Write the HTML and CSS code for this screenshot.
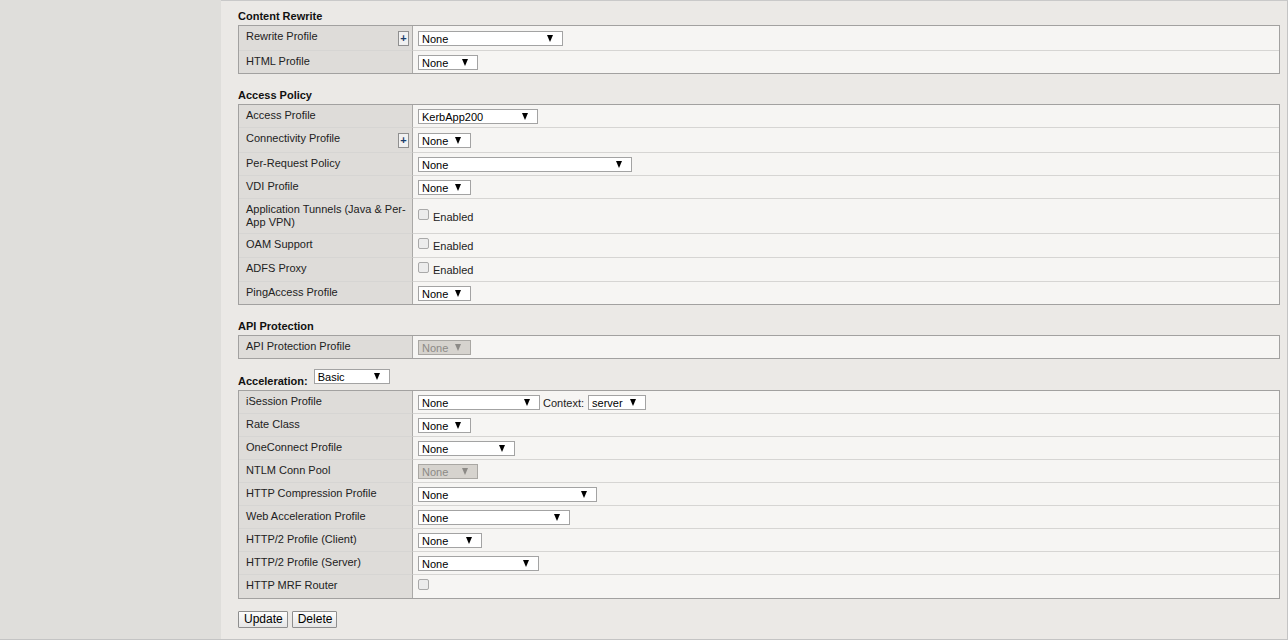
FILE: index.html
```html
<!DOCTYPE html>
<html lang="en">

<head>
    <meta charset="UTF-8">
    <meta name="viewport" content="width=device-width, initial-scale=1.0">
    <title>Virtual Server Properties</title>
    <link rel="stylesheet" href="styles.css">
</head>

<body>
    <div class="sidebar"></div>

    <div class="main">
        <h2 class="section-title">Content Rewrite</h2>
        <table class="props">
            <tr>
                <td class="label">Rewrite Profile <span class="plus">+</span></td>
                <td class="value"><span class="select w145">None<i class="arrow"></i></span></td>
            </tr>
            <tr>
                <td class="label">HTML Profile</td>
                <td class="value"><span class="select w60">None<i class="arrow"></i></span></td>
            </tr>
        </table>

        <h2 class="section-title">Access Policy</h2>
        <table class="props">
            <tr>
                <td class="label">Access Profile</td>
                <td class="value"><span class="select w120">KerbApp200<i class="arrow"></i></span></td>
            </tr>
            <tr>
                <td class="label">Connectivity Profile <span class="plus">+</span></td>
                <td class="value"><span class="select w53">None<i class="arrow"></i></span></td>
            </tr>
            <tr>
                <td class="label">Per-Request Policy</td>
                <td class="value"><span class="select w214">None<i class="arrow"></i></span></td>
            </tr>
            <tr>
                <td class="label">VDI Profile</td>
                <td class="value"><span class="select w53">None<i class="arrow"></i></span></td>
            </tr>
            <tr>
                <td class="label">Application Tunnels (Java &amp; Per-App VPN)</td>
                <td class="value"><span class="check"><i class="box"></i>Enabled</span></td>
            </tr>
            <tr>
                <td class="label">OAM Support</td>
                <td class="value"><span class="check"><i class="box"></i>Enabled</span></td>
            </tr>
            <tr>
                <td class="label">ADFS Proxy</td>
                <td class="value"><span class="check"><i class="box"></i>Enabled</span></td>
            </tr>
            <tr>
                <td class="label">PingAccess Profile</td>
                <td class="value"><span class="select w53">None<i class="arrow"></i></span></td>
            </tr>
        </table>

        <h2 class="section-title">API Protection</h2>
        <table class="props">
            <tr>
                <td class="label">API Protection Profile</td>
                <td class="value"><span class="select w53 disabled">None<i class="arrow"></i></span></td>
            </tr>
        </table>

        <div class="accel-title">
            <h2 class="section-title">Acceleration:</h2>
            <span class="select w76">Basic<i class="arrow"></i></span>
        </div>
        <table class="props">
            <tr>
                <td class="label">iSession Profile</td>
                <td class="value">
                    <span class="select w122">None<i class="arrow"></i></span>
                    <span class="context">Context:</span>
                    <span class="select w58">server<i class="arrow"></i></span>
                </td>
            </tr>
            <tr>
                <td class="label">Rate Class</td>
                <td class="value"><span class="select w53">None<i class="arrow"></i></span></td>
            </tr>
            <tr>
                <td class="label">OneConnect Profile</td>
                <td class="value"><span class="select w97">None<i class="arrow"></i></span></td>
            </tr>
            <tr>
                <td class="label">NTLM Conn Pool</td>
                <td class="value"><span class="select w60 disabled">None<i class="arrow"></i></span></td>
            </tr>
            <tr>
                <td class="label">HTTP Compression Profile</td>
                <td class="value"><span class="select w179">None<i class="arrow"></i></span></td>
            </tr>
            <tr>
                <td class="label">Web Acceleration Profile</td>
                <td class="value"><span class="select w152">None<i class="arrow"></i></span></td>
            </tr>
            <tr>
                <td class="label">HTTP/2 Profile (Client)</td>
                <td class="value"><span class="select w64">None<i class="arrow"></i></span></td>
            </tr>
            <tr>
                <td class="label">HTTP/2 Profile (Server)</td>
                <td class="value"><span class="select w121">None<i class="arrow"></i></span></td>
            </tr>
            <tr>
                <td class="label">HTTP MRF Router</td>
                <td class="value"><span class="check"><i class="box"></i></span></td>
            </tr>
        </table>

        <div class="actions">
            <button type="button" class="btn">Update</button>
            <button type="button" class="btn">Delete</button>
        </div>
    </div>
</body>

</html>
```

FILE: styles.css
```css
html, body {
    margin: 0;
    height: 100%;
}

body {
    font-family: "Liberation Sans", Arial, sans-serif;
    font-size: 11px;
    color: #222;
    display: flex;
    box-sizing: border-box;
    border-bottom: 1px solid #c4c4c4;
    overflow: hidden;
}

.sidebar {
    width: 221px;
    flex-shrink: 0;
    background-color: #dfdedb;
}

.main {
    flex: 1;
    background-color: #ebe9e6;
    border-top: 1px solid #c9c9c9;
    border-right: 1px solid #c4c4c4;
    padding: 0 7px 0 17px;
}

.section-title {
    font-size: 11px;
    font-weight: bold;
    color: #111;
    line-height: 14px;
    margin: 14px 0 2px;
}

.main > .section-title:first-child {
    margin-top: 8px;
}

.props {
    width: 100%;
    border-collapse: separate;
    border-spacing: 0;
    border: 1px solid #a2a1a0;
    table-layout: fixed;
}

.props td {
    box-sizing: border-box;
    border-bottom: 1px solid #d6d5d3;
}

.props tr:last-child td {
    border-bottom: none;
}

.label {
    width: 174px;
    background-color: #dedcd9;
    border-right: 1px solid #aaa9a7;
    padding: 4px 3px 4px 7px;
    line-height: 13px;
    vertical-align: top;
}

.value {
    background-color: #f6f5f3;
    padding: 4px 5px 3px;
    vertical-align: middle;
}

.plus {
    float: right;
    box-sizing: border-box;
    width: 11px;
    height: 15px;
    margin-top: 1px;
    border: 1px solid #8f8f8f;
    background-color: #f1f1f1;
    font-size: 11px;
    font-weight: bold;
    line-height: 12px;
    text-align: center;
    color: #1a3d6b;
}

.select {
    display: inline-flex;
    align-items: center;
    justify-content: space-between;
    box-sizing: border-box;
    height: 15px;
    padding: 0 9px 0 3px;
    border: 1px solid #a3a3a3;
    background-color: #fff;
    color: #000;
    font-size: 11px;
    vertical-align: middle;
}

.select .arrow {
    width: 0;
    height: 0;
    border-left: 3.5px solid transparent;
    border-right: 3.5px solid transparent;
    border-top: 7px solid #000;
}

.select.disabled {
    background-color: #d6d3ce;
    border-color: #a9a7a3;
    color: #8c8a86;
}

.select.disabled .arrow {
    border-top-color: #8c8a86;
}

.w53 { width: 53px; }
.w58 { width: 58px; }
.w60 { width: 60px; }
.w64 { width: 64px; }
.w76 { width: 76px; }
.w97 { width: 97px; }
.w120 { width: 120px; }
.w121 { width: 121px; }
.w122 { width: 122px; }
.w145 { width: 145px; }
.w152 { width: 152px; }
.w179 { width: 179px; }
.w214 { width: 214px; }

.context {
    margin: 0 1px 0 0;
    vertical-align: middle;
}

.check {
    display: inline-flex;
    align-items: center;
    height: 16px;
}

.check .box {
    box-sizing: border-box;
    width: 11px;
    height: 11px;
    margin: -5px 4px 0 0;
    border: 1px solid #a9a9a9;
    border-radius: 2px;
    background-color: #ececec;
}

.accel-title {
    display: flex;
    align-items: flex-start;
    margin: 10px 0 2px;
}

.accel-title .section-title {
    margin: 5px 6px 0 0;
}

.actions {
    display: flex;
    gap: 4px;
    margin-top: 12px;
}

.btn {
    font-family: "Liberation Sans", Arial, sans-serif;
    font-size: 12px;
    color: #000;
    height: 17px;
    padding: 0 4px 0 5px;
    line-height: 15px;
    border: 1px solid #8e8e8e;
    border-radius: 1px;
    background: linear-gradient(#fcfcfc, #e6e6e6);
    cursor: pointer;
}
```
